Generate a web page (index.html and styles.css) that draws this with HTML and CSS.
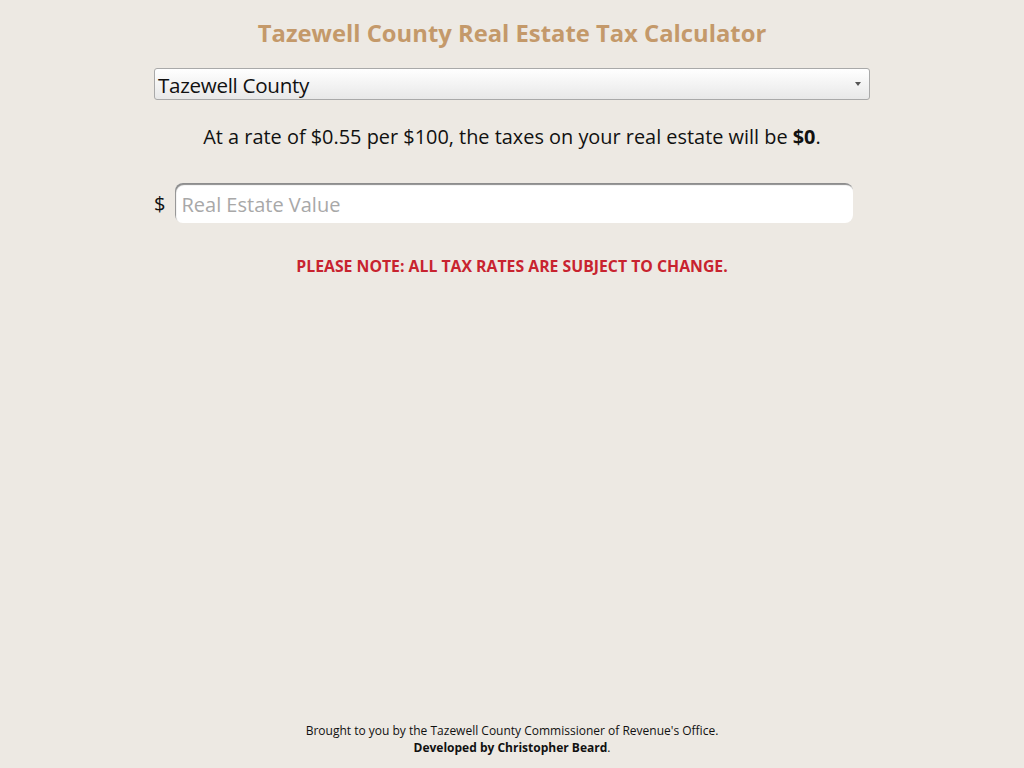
FILE: index.html
```html
<!DOCTYPE html>
<html lang="en">
<head>
<meta charset="utf-8">
<title>Tazewell County Real Estate Tax Calculator</title>
<link rel="stylesheet" href="styles.css">
</head>
<body>
<div class="page">
  <main class="calc">
    <h1 class="title">Tazewell County Real Estate Tax Calculator</h1>
    <div class="select-box">
      <span class="select-text">Tazewell County</span>
      <span class="select-arrow"></span>
    </div>
    <p class="result">At a rate of $0.55 per $100, the taxes on your real estate will be <b>$0</b>.</p>
    <div class="value-row">
      <span class="dollar">$</span>
      <input class="value-input" type="text" placeholder="Real Estate Value">
    </div>
    <p class="note">PLEASE NOTE: ALL TAX RATES ARE SUBJECT TO CHANGE.</p>
  </main>
  <footer class="footer">
    <div>Brought to you by the Tazewell County Commissioner of Revenue's Office.</div>
    <div><b>Developed by Christopher Beard</b>.</div>
  </footer>
</div>
</body>
</html>
```
FILE: styles.css
```css
html, body {
  margin: 0;
  padding: 0;
  background: #ede9e3;
  font-family: "Open Sans", "Liberation Sans", sans-serif;
  color: #111;
}
.page {
  height: 768px;
  display: flex;
  flex-direction: column;
  align-items: center;
}
.calc {
  width: 716px;
  flex: 1;
  display: flex;
  flex-direction: column;
}
.title {
  margin: 15px 0 0;
  text-align: center;
  font-size: 23.8px;
  line-height: 36px;
  font-weight: 700;
  color: #c4996a;
}
.select-box {
  margin-top: 17px;
  height: 30px;
  border: 1px solid #a9a9a9;
  border-radius: 3px;
  background: linear-gradient(#ffffff, #e8e8e8);
  display: flex;
  align-items: center;
  justify-content: space-between;
  padding: 0 8px 0 3px;
}
.select-text {
  font-size: 20.6px;
  font-stretch: 90%;
  letter-spacing: -0.3px;
  color: #111;
  padding-top: 1px;
}
.select-arrow {
  width: 0;
  height: 0;
  border-left: 3.5px solid transparent;
  border-right: 3.5px solid transparent;
  border-top: 4px solid #555;
}
.result {
  margin: 22px 0 0;
  text-align: center;
  font-size: 19.9px;
  line-height: 30px;
}
.value-row {
  margin-top: 31px;
  display: flex;
  align-items: center;
  gap: 10px;
  width: 699px;
}
.dollar {
  font-size: 20px;
}
.value-input {
  flex: 1;
  height: 40px;
  box-sizing: border-box;
  border: none;
  border-radius: 8px;
  background: #fff;
  box-shadow: inset 1px 2px 1px #8d8d8d;
  padding: 2px 6px 0;
  font-family: inherit;
  font-size: 20px;
  color: #111;
  outline: none;
}
.value-input::placeholder {
  color: #a8a8a8;
}
.note {
  margin: 32px 0 0;
  text-align: center;
  font-size: 15.8px;
  font-weight: 700;
  color: #c8232f;
}
.footer {
  text-align: center;
  font-size: 12px;
  line-height: 17px;
  padding-bottom: 12px;
  color: #111;
}
```
